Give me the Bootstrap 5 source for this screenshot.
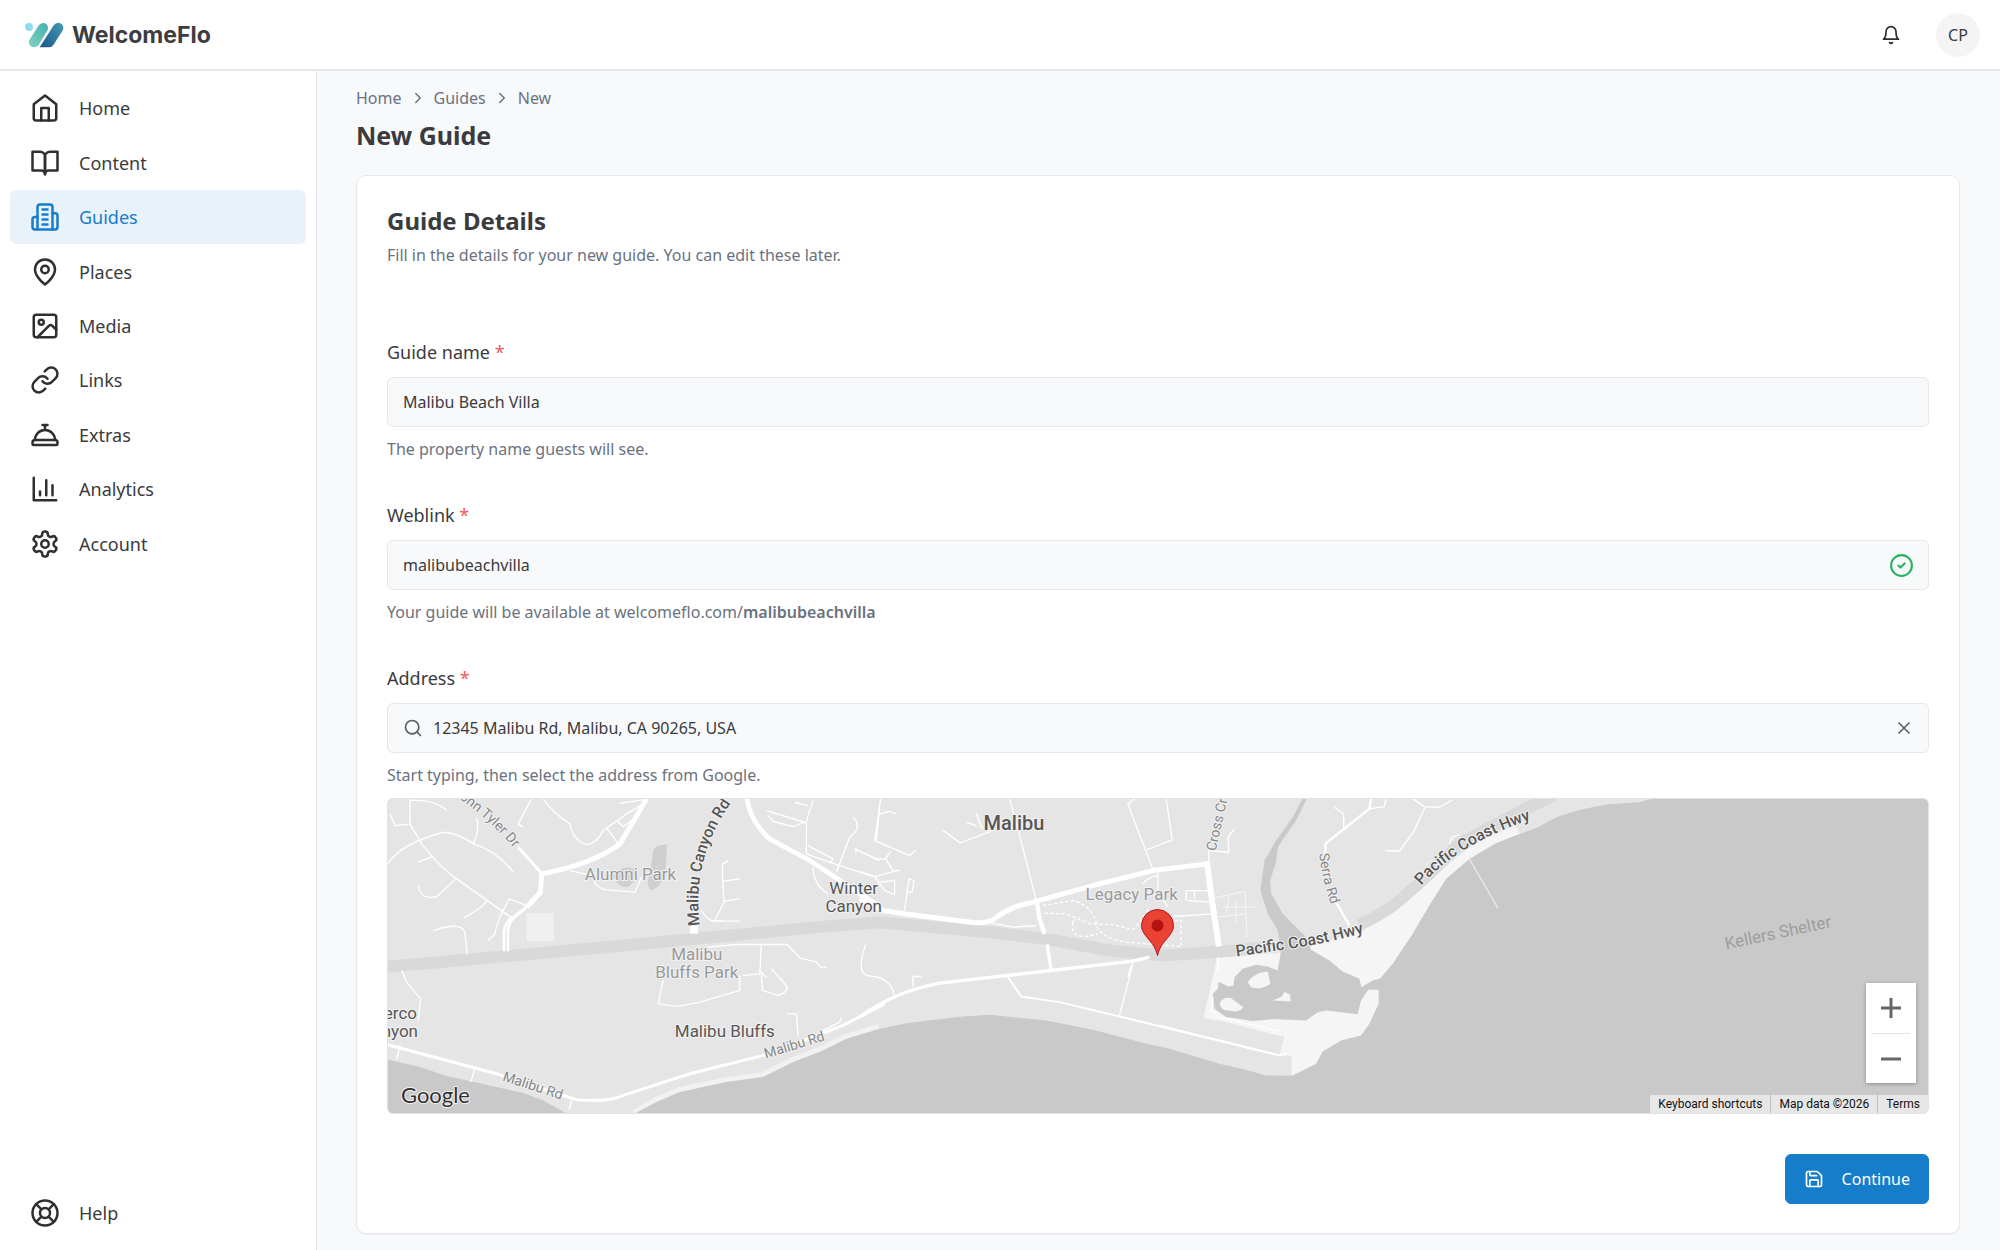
<!DOCTYPE html>
<html lang="en">
<head>
<meta charset="utf-8">
<meta name="viewport" content="width=device-width, initial-scale=1">
<title>New Guide - WelcomeFlo</title>
<link href="https://cdn.jsdelivr.net/npm/bootstrap@5.3.0/dist/css/bootstrap.min.css" rel="stylesheet">
<style>
  :root { --ink: #3a3b3d; --muted: #6b7280; --line: #e6e7ea; --blue: #167dcb; --field: #f8f9fb; }
  body { font-family: "Noto Sans", "Open Sans", sans-serif; font-size: 16px; line-height: 24px; color: var(--ink); background: #f8f9fb; }
  .app-shell { min-height: 100vh; }
  .topbar { height: 71px; border-bottom: 2px solid var(--line); padding: 0 20px 0 24px; }
  .topbar-tools { gap: 35px; }
  .brand-name { font-family: Inter, sans-serif; font-weight: 700; font-size: 23px; line-height: 28px; color: #3c3d40; }
  .ico { fill: none; stroke: currentColor; stroke-width: 2; stroke-linecap: round; stroke-linejoin: round; flex: none; }
  .bell-btn { color: #2b2c2e; }
  .avatar-btn { width: 44px; height: 44px; background: #f4f4f5; color: var(--ink); }
  .side { width: 317px; background: #fff; border-right: 1px solid var(--line); padding: 10px; }
  .side-list { display: grid; grid-auto-rows: 1fr; height: 490px; }
  .side-item { color: var(--ink); font-size: 18px; padding: 0 19px 0 20px; gap: 19px; border-radius: 6px; min-height: 54px; }
  .side-item .ico { width: 30px; height: 30px; color: #2e2f31; }
  .side-item.active { background: #e9f1fb; color: var(--blue); }
  .side-item.active .ico { color: var(--blue); }
  .page { padding: 15px 40px 16px 39px; }
  .crumbs { color: var(--muted); gap: 7px; }
  .crumbs a { color: inherit; }
  .page-title, .panel-title { font-weight: 700; font-size: 25px; line-height: 36px; }
  .panel-title { font-size: 24px; }
  .page-title { margin: 7px 0 22px; }
  .panel { border: 1px solid var(--line); border-radius: 10px; box-shadow: 0 1px 2px rgba(0,0,0,.04); padding: 27px 30px 29px; }
  .hint { color: var(--muted); }
  .hint strong { font-weight: 600; }
  .intro { margin: 4px 0 71px; }
  .field-label { font-size: 18px; line-height: 28px; margin-bottom: 11px; }
  .field-label span { color: #ef5b5b; }
  .field-box { height: 50px; background: var(--field); border: 1px solid var(--line); border-radius: 6px; padding: 0 14px 0 15px; gap: 10px; margin-bottom: 10px; }
  .field-box input { color: var(--ink); height: 100%; }
  .field-box .ico { color: #5d6066; }
  .field-box .ok { color: #27b35c; }
  .field-group { margin-bottom: 40px; }
  .save-btn { --bs-btn-bg: #167dcb; --bs-btn-border-color: #167dcb; --bs-btn-color: #fff; --bs-btn-hover-bg: #126eb4; --bs-btn-hover-color: #fff; height: 50px; padding: 0 18px; gap: 18px; border-radius: 6px; }
  .map-box { height: 316px; border: 1px solid #e3e3e4; border-radius: 6px; background: #c9c9c9; font-family: Roboto, sans-serif; margin-top: 11px; margin-bottom: 40px; }
  .map-box > svg { width: 100%; height: 100%; }
  .zoomer { right: 12px; bottom: 30px; width: 50px; background: #fff; box-shadow: 0 1px 4px rgba(0,0,0,.3); padding: 0 6px; }
  .zoomer button { height: 50px; width: 100%; color: #666; }
  .zoomer button + button { border-top: 1px solid #e6e6e6 !important; }
  .credit { right: 0; bottom: 0; font-size: 12px; line-height: 18px; color: #111; background: #e7e7e7; }
  .credit > * { padding: 0 8px; color: inherit; }
  .credit > * + * { border-left: 1px solid #bdbdbd !important; }
  .m-road { fill: none; stroke: #fff; stroke-linejoin: round; stroke-linecap: butt; }
  .m-text text { paint-order: stroke; stroke: #f2f2f2; stroke-width: 2px; stroke-linejoin: round; fill: #565656; }
  .m-text .m-park { fill: #999; }
  .m-text .m-street { fill: #868686; font-size: 14px; }
  .m-text .m-plain { stroke: none; fill: #9d9d9d; }
  .m-text .m-logo { font-family: Lato, sans-serif; font-size: 22px; fill: #2f2f2f; }
</style>
</head>
<body>
<div class="app-shell d-flex flex-column">
  <header class="topbar bg-white d-flex align-items-center justify-content-between">
    <a href="#" class="d-flex align-items-center gap-2 text-decoration-none">
      <svg width="40" height="28" viewBox="72 61 120 84" aria-hidden="true">
        <defs>
          <linearGradient id="g1" x1="1" y1="0" x2="0" y2="1"><stop offset="0" stop-color="#47b0b0"/><stop offset="1" stop-color="#80d3c2"/></linearGradient>
          <linearGradient id="g2" x1="1" y1="0" x2="0" y2="1"><stop offset="0" stop-color="#479bb3"/><stop offset="1" stop-color="#1a5689"/></linearGradient>
        </defs>
        <circle cx="87" cy="79" r="12" fill="#8edcf4"/>
        <path fill="url(#g1)" d="M117 73Q124 66 133 67Q148 73 143 88L116 133Q110 141 99 140Q85 135 87 121Q88 118 90 115Z"/>
        <path fill="url(#g2)" d="M119 140L160 75Q166 66 176 66Q191 69 190 84Q189 88 187 91L160 133Q155 140 148 140Z"/>
      </svg>
      <span class="brand-name">WelcomeFlo</span>
    </a>
    <div class="topbar-tools d-flex align-items-center">
      <button type="button" class="bell-btn btn p-0 border-0 d-flex" aria-label="Notifications">
        <svg class="ico" width="20" height="20" viewBox="0 0 24 24"><path d="M6 8a6 6 0 0 1 12 0c0 7 3 9 3 9H3s3-2 3-9"/><path d="M10.3 21a1.94 1.94 0 0 0 3.4 0"/></svg>
      </button>
      <button type="button" class="avatar-btn btn p-0 border-0 rounded-circle">CP</button>
    </div>
  </header>

  <div class="d-flex flex-grow-1">
    <nav class="side d-flex flex-column flex-shrink-0 justify-content-between" aria-label="Main">
      <div class="side-list">
        <a href="#" class="side-item d-flex align-items-center text-decoration-none"><svg class="ico" viewBox="0 0 24 24"><path d="m3 9 9-7 9 7v11a2 2 0 0 1-2 2H5a2 2 0 0 1-2-2z"/><path d="M9 22V12h6v10"/></svg>Home</a>
        <a href="#" class="side-item d-flex align-items-center text-decoration-none"><svg class="ico" viewBox="0 0 24 24"><path d="M2 3h6a4 4 0 0 1 4 4v14a3 3 0 0 0-3-3H2z"/><path d="M22 3h-6a4 4 0 0 0-4 4v14a3 3 0 0 1 3-3h7z"/></svg>Content</a>
        <a href="#" class="side-item active d-flex align-items-center text-decoration-none" aria-current="page"><svg class="ico" viewBox="0 0 24 24"><path d="M6 22V4a2 2 0 0 1 2-2h8a2 2 0 0 1 2 2v18Z"/><path d="M6 12H4a2 2 0 0 0-2 2v6a2 2 0 0 0 2 2h2M18 9h2a2 2 0 0 1 2 2v9a2 2 0 0 1-2 2h-2M10 6h4M10 10h4M10 14h4M10 18h4"/></svg>Guides</a>
        <a href="#" class="side-item d-flex align-items-center text-decoration-none"><svg class="ico" viewBox="0 0 24 24"><path d="M20 10c0 6-8 12-8 12s-8-6-8-12a8 8 0 0 1 16 0Z"/><circle cx="12" cy="10" r="3"/></svg>Places</a>
        <a href="#" class="side-item d-flex align-items-center text-decoration-none"><svg class="ico" viewBox="0 0 24 24"><rect x="3" y="3" width="18" height="18" rx="2"/><circle cx="9" cy="9" r="2"/><path d="m21 15-3.086-3.086a2 2 0 0 0-2.828 0L6 21"/></svg>Media</a>
        <a href="#" class="side-item d-flex align-items-center text-decoration-none"><svg class="ico" viewBox="0 0 24 24"><path d="M10 13a5 5 0 0 0 7.54.54l3-3a5 5 0 0 0-7.07-7.07l-1.72 1.71"/><path d="M14 11a5 5 0 0 0-7.54-.54l-3 3a5 5 0 0 0 7.07 7.07l1.71-1.71"/></svg>Links</a>
        <a href="#" class="side-item d-flex align-items-center text-decoration-none"><svg class="ico" viewBox="0 0 24 24"><path d="M3 20a1 1 0 0 1-1-1v-1a2 2 0 0 1 2-2h16a2 2 0 0 1 2 2v1a1 1 0 0 1-1 1Z"/><path d="M20 16a8 8 0 1 0-16 0M12 4v4M10 4h4"/></svg>Extras</a>
        <a href="#" class="side-item d-flex align-items-center text-decoration-none"><svg class="ico" viewBox="0 0 24 24"><path d="M3 3v18h18M18 17V9M13 17V5M8 17v-3"/></svg>Analytics</a>
        <a href="#" class="side-item d-flex align-items-center text-decoration-none"><svg class="ico" viewBox="0 0 24 24"><path d="M12.22 2h-.44a2 2 0 0 0-2 2v.18a2 2 0 0 1-1 1.73l-.43.25a2 2 0 0 1-2 0l-.15-.08a2 2 0 0 0-2.73.73l-.22.38a2 2 0 0 0 .73 2.73l.15.1a2 2 0 0 1 1 1.72v.51a2 2 0 0 1-1 1.74l-.15.09a2 2 0 0 0-.73 2.73l.22.38a2 2 0 0 0 2.73.73l.15-.08a2 2 0 0 1 2 0l.43.25a2 2 0 0 1 1 1.73V20a2 2 0 0 0 2 2h.44a2 2 0 0 0 2-2v-.18a2 2 0 0 1 1-1.73l.43-.25a2 2 0 0 1 2 0l.15.08a2 2 0 0 0 2.73-.73l.22-.39a2 2 0 0 0-.73-2.73l-.15-.08a2 2 0 0 1-1-1.74v-.5a2 2 0 0 1 1-1.74l.15-.09a2 2 0 0 0 .73-2.73l-.22-.38a2 2 0 0 0-2.73-.73l-.15.08a2 2 0 0 1-2 0l-.43-.25a2 2 0 0 1-1-1.73V4a2 2 0 0 0-2-2z"/><circle cx="12" cy="12" r="3"/></svg>Account</a>
      </div>
      <a href="#" class="side-item d-flex align-items-center text-decoration-none"><svg class="ico" viewBox="0 0 24 24"><circle cx="12" cy="12" r="10"/><circle cx="12" cy="12" r="4"/><path d="m4.93 4.93 4.24 4.24M14.83 9.17l4.24-4.24M14.83 14.83l4.24 4.24M9.17 14.83l-4.24 4.24"/></svg>Help</a>
    </nav>

    <main class="page flex-grow-1">
      <nav class="crumbs d-flex align-items-center" aria-label="Breadcrumb">
        <a href="#" class="text-decoration-none">Home</a>
        <svg class="ico" width="18" height="18" viewBox="0 0 24 24"><path d="m9 18 6-6-6-6"/></svg>
        <a href="#" class="text-decoration-none">Guides</a>
        <svg class="ico" width="18" height="18" viewBox="0 0 24 24"><path d="m9 18 6-6-6-6"/></svg>
        <span>New</span>
      </nav>
      <h1 class="page-title">New Guide</h1>

      <form class="panel bg-white">
        <h2 class="panel-title mb-0">Guide Details</h2>
        <p class="hint intro">Fill in the details for your new guide. You can edit these later.</p>

        <div class="field-group">
          <label class="field-label d-block" for="gname">Guide name <span>*</span></label>
          <div class="field-box d-flex align-items-center"><input id="gname" class="form-control-plaintext p-0" type="text" value="Malibu Beach Villa"></div>
          <div class="hint">The property name guests will see.</div>
        </div>

        <div class="field-group">
          <label class="field-label d-block" for="weblink">Weblink <span>*</span></label>
          <div class="field-box d-flex align-items-center">
            <input id="weblink" class="form-control-plaintext p-0" type="text" value="malibubeachvilla">
            <svg class="ico ok" width="25" height="25" viewBox="0 0 24 24"><circle cx="12" cy="12" r="10"/><path d="m9 12 2 2 4-4"/></svg>
          </div>
          <div class="hint">Your guide will be available at welcomeflo.com/<strong>malibubeachvilla</strong></div>
        </div>

        <label class="field-label d-block" for="addr">Address <span>*</span></label>
        <div class="field-box d-flex align-items-center">
          <svg class="ico" width="20" height="20" viewBox="0 0 24 24"><circle cx="11" cy="11" r="8"/><path d="m21 21-4.3-4.3"/></svg>
          <input id="addr" class="form-control-plaintext p-0" type="text" value="12345 Malibu Rd, Malibu, CA 90265, USA">
          <button type="button" class="btn p-0 border-0 d-flex" aria-label="Clear address"><svg class="ico" width="20" height="20" viewBox="0 0 24 24"><path d="M18 6 6 18M6 6l12 12"/></svg></button>
        </div>
        <div class="hint">Start typing, then select the address from Google.</div>

        <div class="map-box position-relative overflow-hidden">
          <svg class="d-block" viewBox="0 0 1541 315" preserveAspectRatio="xMidYMid slice" role="img" aria-label="Map of Malibu">
            <defs>
              <path id="tyler" d="M71 0Q107 24 136 62"/>
              <path id="canyon" d="M312 127C306 82 318 40 342 6"/>
              <path id="serra" d="M932 55Q934 80 945 110"/>
              <path id="pch1" d="M849 158L898 151Q945 144 984 132"/>
              <path id="pch2" d="M1034 87Q1070 46 1143 21"/>
            </defs>
            <rect width="1541" height="315" fill="#e5e5e5"/>
            <g transform="scale(.33333)">
              <g transform="translate(2316 -24)">
                <path fill="#f5f5f5" d="M172 500L350 488 450 470 560 435 640 400 720 345 800 280 880 210 960 150 1070 105 1085 135 1000 300 700 600 680 640 640 750 490 830 396 856 396 795 360 795 374 740 200 695 132 683 160 560Z"/>
                <path fill="#c9c9c9" d="M430 24L400 80 350 150 315 210 303 300 325 370 355 420 365 480 355 540 325 528 290 523 250 535 225 560 222 585 205 588 178 573 175 595 160 610 165 655 200 680 280 692 340 686 440 690 475 665 500 660 595 671 605 630 625 600 680 560 640 570 606 590 600 565 550 543 510 510 455 478 440 440 370 370 335 310 332 270 350 215 355 170 410 90 442 24Z"/>
                <path fill="#f5f5f5" d="M265 575Q285 545 325 543L333 580Q305 600 275 590ZM180 640Q190 618 215 623L252 650Q240 668 205 660Q185 660 180 640ZM340 630L367 618 375 604 392 612 394 633Z"/>
              </g>
              <path fill="none" stroke="#f1f1f1" stroke-width="30" d="M741 948L806 911 876 881 1016 851 1126 836 1216 791 1306 756 1376 721 1476 691"/>
              <path fill="#c9c9c9" d="M0 784L96 806 176 833 326 866 406 884 466 906 536 945H0Z"/>
              <path fill="#c9c9c9" d="M741 945L806 911 876 881 1016 851 1126 836 1216 791 1306 756 1376 721 1476 691 1566 673 1726 654 1806 649 1976 666 2116 694 2266 733 2346 751 2496 796 2616 823 2640 830 2716 831 2786 796 2806 759 2861 726 2921 711 2946 676 2974 616 2974 574 2941 574 2950 556 2976 543 3016 496 3076 406 3126 321 3176 241 3246 181 3326 134 3396 106 3446 88 3506 56 3576 34 3656 18 3756 11 3796 0H4640V945Z"/>
              <path fill="none" stroke="#d9d9d9" stroke-width="36" stroke-linejoin="round" d="M-5 505L700 442 1300 385 1476 371 1616 384 1816 402 1976 421 2166 456 2316 470 2416 466 2540 456 2640 445"/>
              <path fill="none" stroke="#d9d9d9" stroke-width="36" d="M2916 380Q2990 345 3036 306L3116 236 3216 136 3416 30 3500 -10"/>
              <path fill="#cfcfcf" d="M820 180Q830 160 862 162L858 230Q850 290 815 298Q795 290 812 240ZM700 255Q740 215 765 240Q765 285 740 290Q710 290 700 255Z" transform="translate(-24 -24)"/>
              <!-- west side roads -->
              <g class="m-road" transform="translate(-24 -24)">
                <path fill="#f0f0f0" stroke="none" d="M440 368h82v84h-82z"/>
                <path stroke-width="15" d="M800 24L765 85 720 160Q640 220 485 250L482 305 440 350"/>
                <path stroke-width="14" d="M1102 24Q1110 90 1170 145L1290 210 1480 335 1500 350"/>
                <path stroke-width="9" d="M415 170L485 248M440 350L395 385"/>
                <path stroke-width="8" d="M440 348L400 384Q385 400 384 425V482M400 378Q374 395 372 425V482"/>
                <path stroke-width="9" d="M0 757L350 850 590 928Q690 936 730 915L930 850 1170 790 1390 705 1515 640"/>
                <path stroke-width="24" d="M942 402V430"/>
                <path stroke-width="4" d="M90 24V100L125 160Q180 230 230 265L400 385M90 30Q160 25 200 58M30 70L45 105 92 100M24 220Q60 160 190 125Q240 130 280 160Q350 180 400 245M280 160Q300 120 290 80M115 215L158 198M115 285Q120 330 170 318L228 265M320 328Q320 345 252 382M388 325L440 345M388 325Q350 390 345 430L325 450M160 420Q250 390 255 430L262 492M65 540L80 575 122 625 115 690M60 765L50 808M285 835L272 875M575 930L568 958M490 24Q510 60 570 100Q580 150 620 162Q650 160 670 120L740 70 790 40M720 38L790 28M680 110L715 160M455 24L415 100 430 110M710 90L730 108 755 90M570 240L640 255Q640 290 680 298L765 305 785 260"/>
                <path stroke-width="4" d="M1028 390L1005 392M1045 210L1028 220V260L1033 335 1005 390M1030 272L1080 265M1033 332L1080 325M965 360Q985 395 1010 392H1080M985 470L1070 462H1222L1260 502 1310 515 1322 530H1342M1145 462L1140 550 1090 555M850 570L835 640 895 648 960 635 1080 600V555M1140 540L1160 560M1145 550L1148 600 1195 615Q1235 600 1215 580L1175 535M1222 670H1250L1255 735M1330 720L1380 695 1385 682M1160 60L1275 95 1240 108 1180 92 1165 75M1300 30L1280 90V190L1350 215 1480 258M1285 165L1360 205 1350 218M1370 245L1410 140Q1450 110 1420 80M1425 175L1500 210M1430 170L1428 190M1245 35L1285 45M1500 50L1490 150M1300 230Q1300 280 1345 310"/>
              </g>
              <!-- town centre roads -->
              <g class="m-road" transform="translate(1416 -24)">
                <path stroke-width="15" d="M0 325L70 360 150 372 340 396Q390 400 410 380Q460 345 520 335L700 285 880 240 1045 220"/>
                <path stroke-width="18" d="M1042 212L1052 290 1078 468"/>
                <path stroke-width="13" d="M532 335L540 385 555 430"/>
                <path stroke-width="10" d="M563 462L574 535M0 680Q100 605 240 578L574 540 820 512 870 500"/>
                <path stroke-width="6" d="M445 560L485 618 600 635 780 678 1200 780"/>
                <path stroke-width="4" d="M63 24L45 150 150 195 168 180M55 72L90 62 108 70M0 182L50 205H78L92 182M78 205L100 240M0 242L45 258 120 238M45 258L75 300 105 312V270L55 275M135 360L148 265 163 270 158 305H145M248 118L302 157 395 122 365 110 350 68M320 95L350 105M450 24L475 115 530 330M825 24L805 40 880 235M920 24L938 148 862 178M1048 210V180L1108 185 1106 140 1125 115M18 462Q-10 540 20 555Q95 560 103 612M160 590V558H185M380 395L460 410 530 405M820 520L780 675M815 525L805 560M895 240V300L925 350M850 280Q870 255 895 255M940 378L1055 370M980 330V300H1045M1005 300V325M985 330L1050 335"/>
                <path stroke-width="2" d="M1070 320L1158 303V345L1163 440M1090 350H1185M1070 380L1160 370M1110 310L1100 370M1130 330V400"/>
                <path stroke-width="4" stroke-dasharray="10 7" d="M550 345L640 330Q700 345 712 405Q720 440 800 455L965 468V390H900M555 368L620 370 690 400 760 402 820 418 845 390 870 350M640 395Q630 440 680 438L715 430M640 395L650 380"/>
              </g>
              <!-- east side roads -->
              <g class="m-road" transform="translate(2316 -24)">
                <path stroke-width="7" d="M498 190V160L560 110 630 55 635 24M530 335L570 405"/>
                <path stroke-width="4" d="M525 50L553 70V112M630 55L675 48 680 24M760 24L795 48 840 50 880 28M798 48L765 120 720 182 678 180M175 500V545M160 620L155 660 180 680 360 722M870 160L878 140 900 132"/>
                <path stroke-width="4" stroke="#e9e9e9" d="M930 205L1016 353"/>
                <path fill="#e5e5e5" stroke="none" d="M132 683L374 740 358 785 0 700V640H140ZM0 712L360 800H396V855H320L0 765Z"/>
                <path fill="#e5e5e5" stroke="none" d="M1068 105L1085 128 1130 112 1200 75V60L1150 60Z"/>
                <path stroke-width="6" d="M0 706L360 795 382 788"/>
              </g>
            </g>
            <g class="m-text">
              <text x="309" y="162" text-anchor="middle" font-size="17" class="m-park"><tspan x="309">Malibu</tspan><tspan x="309" dy="18">Bluffs Park</tspan></text>
              <text x="197" y="81" font-size="17" class="m-park">Alumni Park</text>
              <text x="698" y="101" font-size="17" class="m-park">Legacy Park</text>
              <text x="287" y="239" font-size="17">Malibu Bluffs</text>
              <text x="466" y="95" text-anchor="middle" font-size="17"><tspan x="466">Winter</tspan><tspan x="466" dy="18">Canyon</tspan></text>
              <text text-anchor="end" font-size="17"><tspan x="29" y="221">Puerco</tspan><tspan x="30" y="239">Canyon</tspan></text>
              <text x="596" y="31" font-size="20" font-weight="500">Malibu</text>
              <text class="m-street"><textPath href="#tyler">ohn Tyler Dr</textPath></text>
              <text font-size="16" font-weight="500"><textPath href="#canyon">Malibu Canyon Rd</textPath></text>
              <text class="m-street" transform="translate(114 282) rotate(18)">Malibu Rd</text>
              <text class="m-street" transform="translate(378 260) rotate(-17)">Malibu Rd</text>
              <text class="m-street" transform="translate(828 53) rotate(-77)">Cross Creek</text>
              <text class="m-street"><textPath href="#serra">Serra Rd</textPath></text>
              <text font-size="16" font-weight="500"><textPath href="#pch1">Pacific Coast Hwy</textPath></text>
              <text font-size="16" font-weight="500"><textPath href="#pch2">Pacific Coast Hwy</textPath></text>
              <text class="m-plain" font-size="17" transform="translate(1339 151) rotate(-12)">Kellers Shelter</text>
              <text class="m-logo" x="13" y="305">Google</text>
            </g>
            <path fill="#ea4335" stroke="#b31412" stroke-width="1" d="M770 157C768 148 763 143 758 137C755 133 754 130 754 127A16 16 0 0 1 786 127C786 130 785 133 782 137C777 143 772 148 770 157Z"/>
            <circle cx="770" cy="127" r="6" fill="#b31412"/>
          </svg>
          <div class="zoomer position-absolute">
            <button type="button" class="btn p-0 border-0 rounded-0 d-flex align-items-center justify-content-center" aria-label="Zoom in"><svg width="20" height="20" viewBox="0 0 20 20"><path d="M0 10h20M10 0v20" stroke="#666" stroke-width="3"/></svg></button>
            <button type="button" class="btn p-0 border-0 rounded-0 d-flex align-items-center justify-content-center" aria-label="Zoom out"><svg width="20" height="20" viewBox="0 0 20 20"><path d="M0 10h20" stroke="#666" stroke-width="3"/></svg></button>
          </div>
          <div class="credit position-absolute d-flex">
            <a href="#" class="text-decoration-none">Keyboard shortcuts</a><span>Map data ©2026</span><a href="#" class="text-decoration-none">Terms</a>
          </div>
        </div>

        <div class="d-flex justify-content-end">
          <button type="submit" class="save-btn btn d-flex align-items-center">
            <svg class="ico" width="20" height="20" viewBox="0 0 24 24"><path d="M15.2 3a2 2 0 0 1 1.4.6l3.8 3.8a2 2 0 0 1 .6 1.4V19a2 2 0 0 1-2 2H5a2 2 0 0 1-2-2V5a2 2 0 0 1 2-2z"/><path d="M17 21v-7a1 1 0 0 0-1-1H8a1 1 0 0 0-1 1v7M7 3v4a1 1 0 0 0 1 1h7"/></svg>
            Continue
          </button>
        </div>
      </form>
    </main>
  </div>
</div>
<script src="https://cdn.jsdelivr.net/npm/bootstrap@5.3.0/dist/js/bootstrap.bundle.min.js"></script>
</body>
</html>
